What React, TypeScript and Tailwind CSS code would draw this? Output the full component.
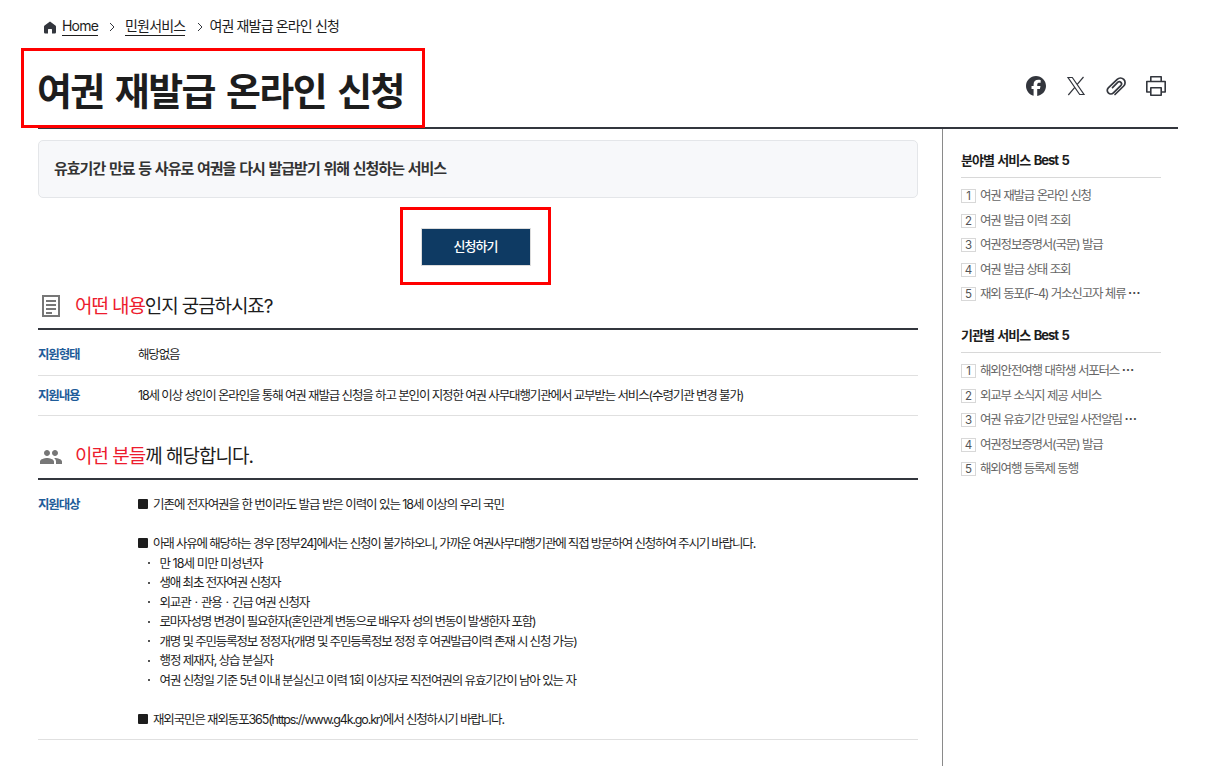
import React from 'react';
import { MdPeople } from 'react-icons/md';
import { FaFacebook } from 'react-icons/fa6';

type Line = { text: string; kind: 'square' | 'dot' | 'blank'; track?: string };

const TARGET_LINES: Line[] = [
  { kind: 'square', text: '기존에 전자여권을 한 번이라도 발급 받은 이력이 있는 18세 이상의 우리 국민', track: 'tracking-[-1.06px]' },
  { kind: 'blank', text: '' },
  { kind: 'square', text: '아래 사유에 해당하는 경우 [정부24]에서는 신청이 불가하오니, 가까운 여권사무대행기관에 직접 방문하여 신청하여 주시기 바랍니다.', track: 'tracking-[-1.18px]' },
  { kind: 'dot', text: '만 18세 미만 미성년자', track: 'tracking-[-0.95px]' },
  { kind: 'dot', text: '생애 최초 전자여권 신청자', track: 'tracking-[-1.15px]' },
  { kind: 'dot', text: '외교관ㆍ관용ㆍ긴급 여권 신청자', track: 'tracking-[-1.15px]' },
  { kind: 'dot', text: '로마자성명 변경이 필요한자(혼인관계 변동으로 배우자 성의 변동이 발생한자 포함)', track: 'tracking-[-1.19px]' },
  { kind: 'dot', text: '개명 및 주민등록정보 정정자(개명 및 주민등록정보 정정 후 여권발급이력 존재 시 신청 가능)', track: 'tracking-[-1.17px]' },
  { kind: 'dot', text: '행정 제재자, 상습 분실자', track: 'tracking-[-1.12px]' },
  { kind: 'dot', text: '여권 신청일 기준 5년 이내 분실신고 이력 1회 이상자로 직전여권의 유효기간이 남아 있는 자', track: 'tracking-[-1.1px]' },
  { kind: 'blank', text: '' },
  { kind: 'square', text: '재외국민은 재외동포365(https://www.g4k.go.kr)에서 신청하시기 바랍니다.', track: 'tracking-[-1.15px]' },
];

const BEST_BY_FIELD = [
  '여권 재발급 온라인 신청',
  '여권 발급 이력 조회',
  '여권정보증명서(국문) 발급',
  '여권 발급 상태 조회',
  '재외 동포(F-4) 거소신고자 체류 ⋯',
];

const BEST_BY_AGENCY = [
  '해외안전여행 대학생 서포터스 ⋯',
  '외교부 소식지 제공 서비스',
  '여권 유효기간 만료일 사전알림 ⋯',
  '여권정보증명서(국문) 발급',
  '해외여행 등록제 동행',
];

function Chevron() {
  return (
    <svg width="6" height="10" viewBox="0 0 6 10" fill="none" stroke="#33363d" strokeWidth="1">
      <path d="M1 1l4 4-4 4" />
    </svg>
  );
}

function BestList({ title, items }: { title: string; items: string[] }) {
  return (
    <section className="w-[200px]">
      <h3 className="h-[35px] border-b border-[#d8d8d8] text-[13px] font-bold leading-[34px] tracking-[-1px] text-[#1d1d1d] [word-spacing:1.4px]">{title}</h3>
      <ol className="pt-[6px]">
        {items.map((item, i) => {
          const cut = item.endsWith('⋯');
          return (
            <li key={item} className="flex h-[24.5px] items-center">
              <span className="mr-1 flex h-[14px] w-[15px] shrink-0 items-center justify-center border border-[#d8d8d8] pt-px text-[11.5px] leading-none text-[#555]">
                {i + 1}
              </span>
              <span className="pt-px text-[12.5px] tracking-[-1.2px] text-[#666] [word-spacing:0.3px]">
                {cut ? item.slice(0, -1) : item}
                {cut && <span className="font-bold text-[#444]">⋯</span>}
              </span>
            </li>
          );
        })}
      </ol>
    </section>
  );
}

export default function App() {
  return (
    <div className="relative h-[766px] w-[1215px] overflow-hidden whitespace-nowrap bg-white pl-[38px] font-['Inter','Noto_Sans_CJK_KR',sans-serif] text-[#1d1d1d]">
      <nav className="flex h-[52px] items-center pl-[6px] text-[14px] tracking-[-1px]">
        <svg className="mt-[2px]" width="12" height="13" viewBox="0 0 12 13" fill="#33363d">
          <path d="M6 0.5 0.6 4.6Q0 5 0 5.8V11.2Q0 12.4 1.2 12.4H4V8.6Q4 8 4.6 8H7.4Q8 8 8 8.6V12.4H10.8Q12 12.4 12 11.2V5.8Q12 5 11.4 4.6Z" />
        </svg>
        <a className="ml-[6px] border-b border-[#1d1d1d] leading-[18px] tracking-[-0.8px]">Home</a>
        <span className="ml-[11px] mt-px"><Chevron /></span>
        <a className="ml-[10px] border-b border-[#1d1d1d] leading-[18px] tracking-[-0.8px]">민원서비스</a>
        <span className="ml-[12px] mt-px"><Chevron /></span>
        <span className="mb-px ml-[6px] tracking-[-0.85px]">여권 재발급 온라인 신청</span>
      </nav>

      <header className="flex h-[77px] w-[1140px] items-center justify-between border-b-2 border-[#33363d]">
        <h1 className="-ml-px pt-[3px] text-[38px] font-bold tracking-[-1.6px] [word-spacing:3.7px]">여권 재발급 온라인 신청</h1>
        <div className="mb-[7px] mr-[12px] flex items-center gap-[20px] text-[#33363d]">
          <FaFacebook className="h-5 w-5" />
          <svg width="20" height="20" viewBox="0 0 20 20" fill="none" stroke="currentColor" strokeWidth="1.2">
            <path d="M2 1.500h4.300l11.700 17h-4.300zM17.500 1l-6.700 7.800M9 11.200 2.300 19" />
          </svg>
          <svg width="20" height="20" viewBox="0 0 20 20" fill="none" stroke="currentColor" strokeWidth="1.7" strokeLinecap="round">
            <path d="M9 18.500 17.700 10a4.600 4.600 0 0 0-6.500-6.600L2.300 11.800a3.600 3.600 0 0 0 5.100 5.100L15 9.300a2.200 2.200 0 0 0-3.100-3.100L6.500 11.600" />
          </svg>
          <svg width="20" height="20" viewBox="0 0 20 20" fill="none" stroke="currentColor" strokeWidth="1.600" strokeLinejoin="round">
            <path d="M4.800 5.500V.8h10.400v4.700M4.800 16H.8V5.500h18.400V16h-4M4.800 11.700h10.400v7.500H4.800z" />
          </svg>
        </div>
      </header>

      <div className="flex h-[637px]">
        <main className="w-[880px] pt-[11px]">
          <p className="flex h-[58px] items-center rounded-[5px] border border-[#e4e6e9] bg-[#f7f8fa] pl-[15px] text-[15px] font-bold tracking-[-1px] text-[#333] [word-spacing:1.2px]">
            유효기간 만료 등 사유로 여권을 다시 발급받기 위해 신청하는 서비스
          </p>
          <div className="mr-1 mt-[30px] flex justify-center">
            <button className="h-[38px] w-[110px] border border-[#dcdcdc] bg-[#0e3a63] pr-px text-[13px] font-medium tracking-[-0.9px] text-white">신청하기</button>
          </div>

          <section>
            <h2 className="flex h-[64px] items-center border-b-2 border-[#33363d] pl-[3px] pt-[20px] text-[19px] tracking-[-1.1px]">
              <svg className="mb-[2px]" width="20" height="24" viewBox="0 0 20 24" fill="none" stroke="#777" strokeWidth="2">
                <path d="M2 2h16v20H2zM5 7h10M5 11h10M5 15h10M5 19h6" />
              </svg>
              <span className="ml-[14px]"><span className="text-[#ed1c2e]">어떤 내용</span>인지 궁금하시죠?</span>
            </h2>
            <dl className="text-[12.5px] tracking-[-1.15px]">
              <div className="flex h-[46px] items-center border-b border-[#e0e0e0] pt-[6px]">
                <dt className="w-[100px] font-bold text-[#1f5c99]">지원형태</dt>
                <dd>해당없음</dd>
              </div>
              <div className="flex h-[40px] items-center border-b border-[#e0e0e0] pt-px">
                <dt className="w-[100px] font-bold text-[#1f5c99]">지원내용</dt>
                <dd className="tracking-[-1.13px]">18세 이상 성인이 온라인을 통해 여권 재발급 신청을 하고 본인이 지정한 여권 사무대행기관에서 교부받는 서비스(수령기관 변경 불가)</dd>
              </div>
            </dl>
          </section>

          <section>
            <h2 className="flex h-[64px] items-center border-b-2 border-[#33363d] pl-px pt-[20px] text-[19px] tracking-[-1px]">
              <MdPeople className="h-6 w-6 text-[#777]" />
              <span className="ml-[12px]"><span className="text-[#ed1c2e]">이런 분들</span>께 해당합니다.</span>
            </h2>
            <dl className="flex h-[260px] border-b border-[#e0e0e0] pt-[15px] text-[12.5px] leading-[19.5px] tracking-[-1.15px]">
              <dt className="w-[100px] font-bold text-[#1f5c99]">지원대상</dt>
              <dd>
                {TARGET_LINES.map((line, i) => (
                  <p key={i} className="flex h-[19.5px] items-center">
                    {line.kind === 'square' && <span className="mb-px mr-[5px] h-[10px] w-[10px] rounded-[1px] bg-[#1d1d1d]" />}
                    {line.kind === 'dot' && <span className="ml-[10px] mr-[9.5px] h-[2px] w-[2px] bg-[#555]" />}
                    <span className={line.track}>{line.text}</span>
                  </p>
                ))}
              </dd>
            </dl>
          </section>
        </main>

        <aside className="ml-6 border-l border-[#8a8a8a] pl-[18px] pt-[14px]">
          <BestList title="분야별 서비스 Best 5" items={BEST_BY_FIELD} />
          <div className="h-[11.5px]" />
          <BestList title="기관별 서비스 Best 5" items={BEST_BY_AGENCY} />
        </aside>
      </div>

      {/* highlight frames */}
      <div className="absolute left-[21px] top-[48px] h-[80px] w-[404px] border-[3px] border-[#ff0000]" />
      <div className="absolute left-[400px] top-[207px] h-[78px] w-[151px] border-[3px] border-[#ff0000]" />
    </div>
  );
}
